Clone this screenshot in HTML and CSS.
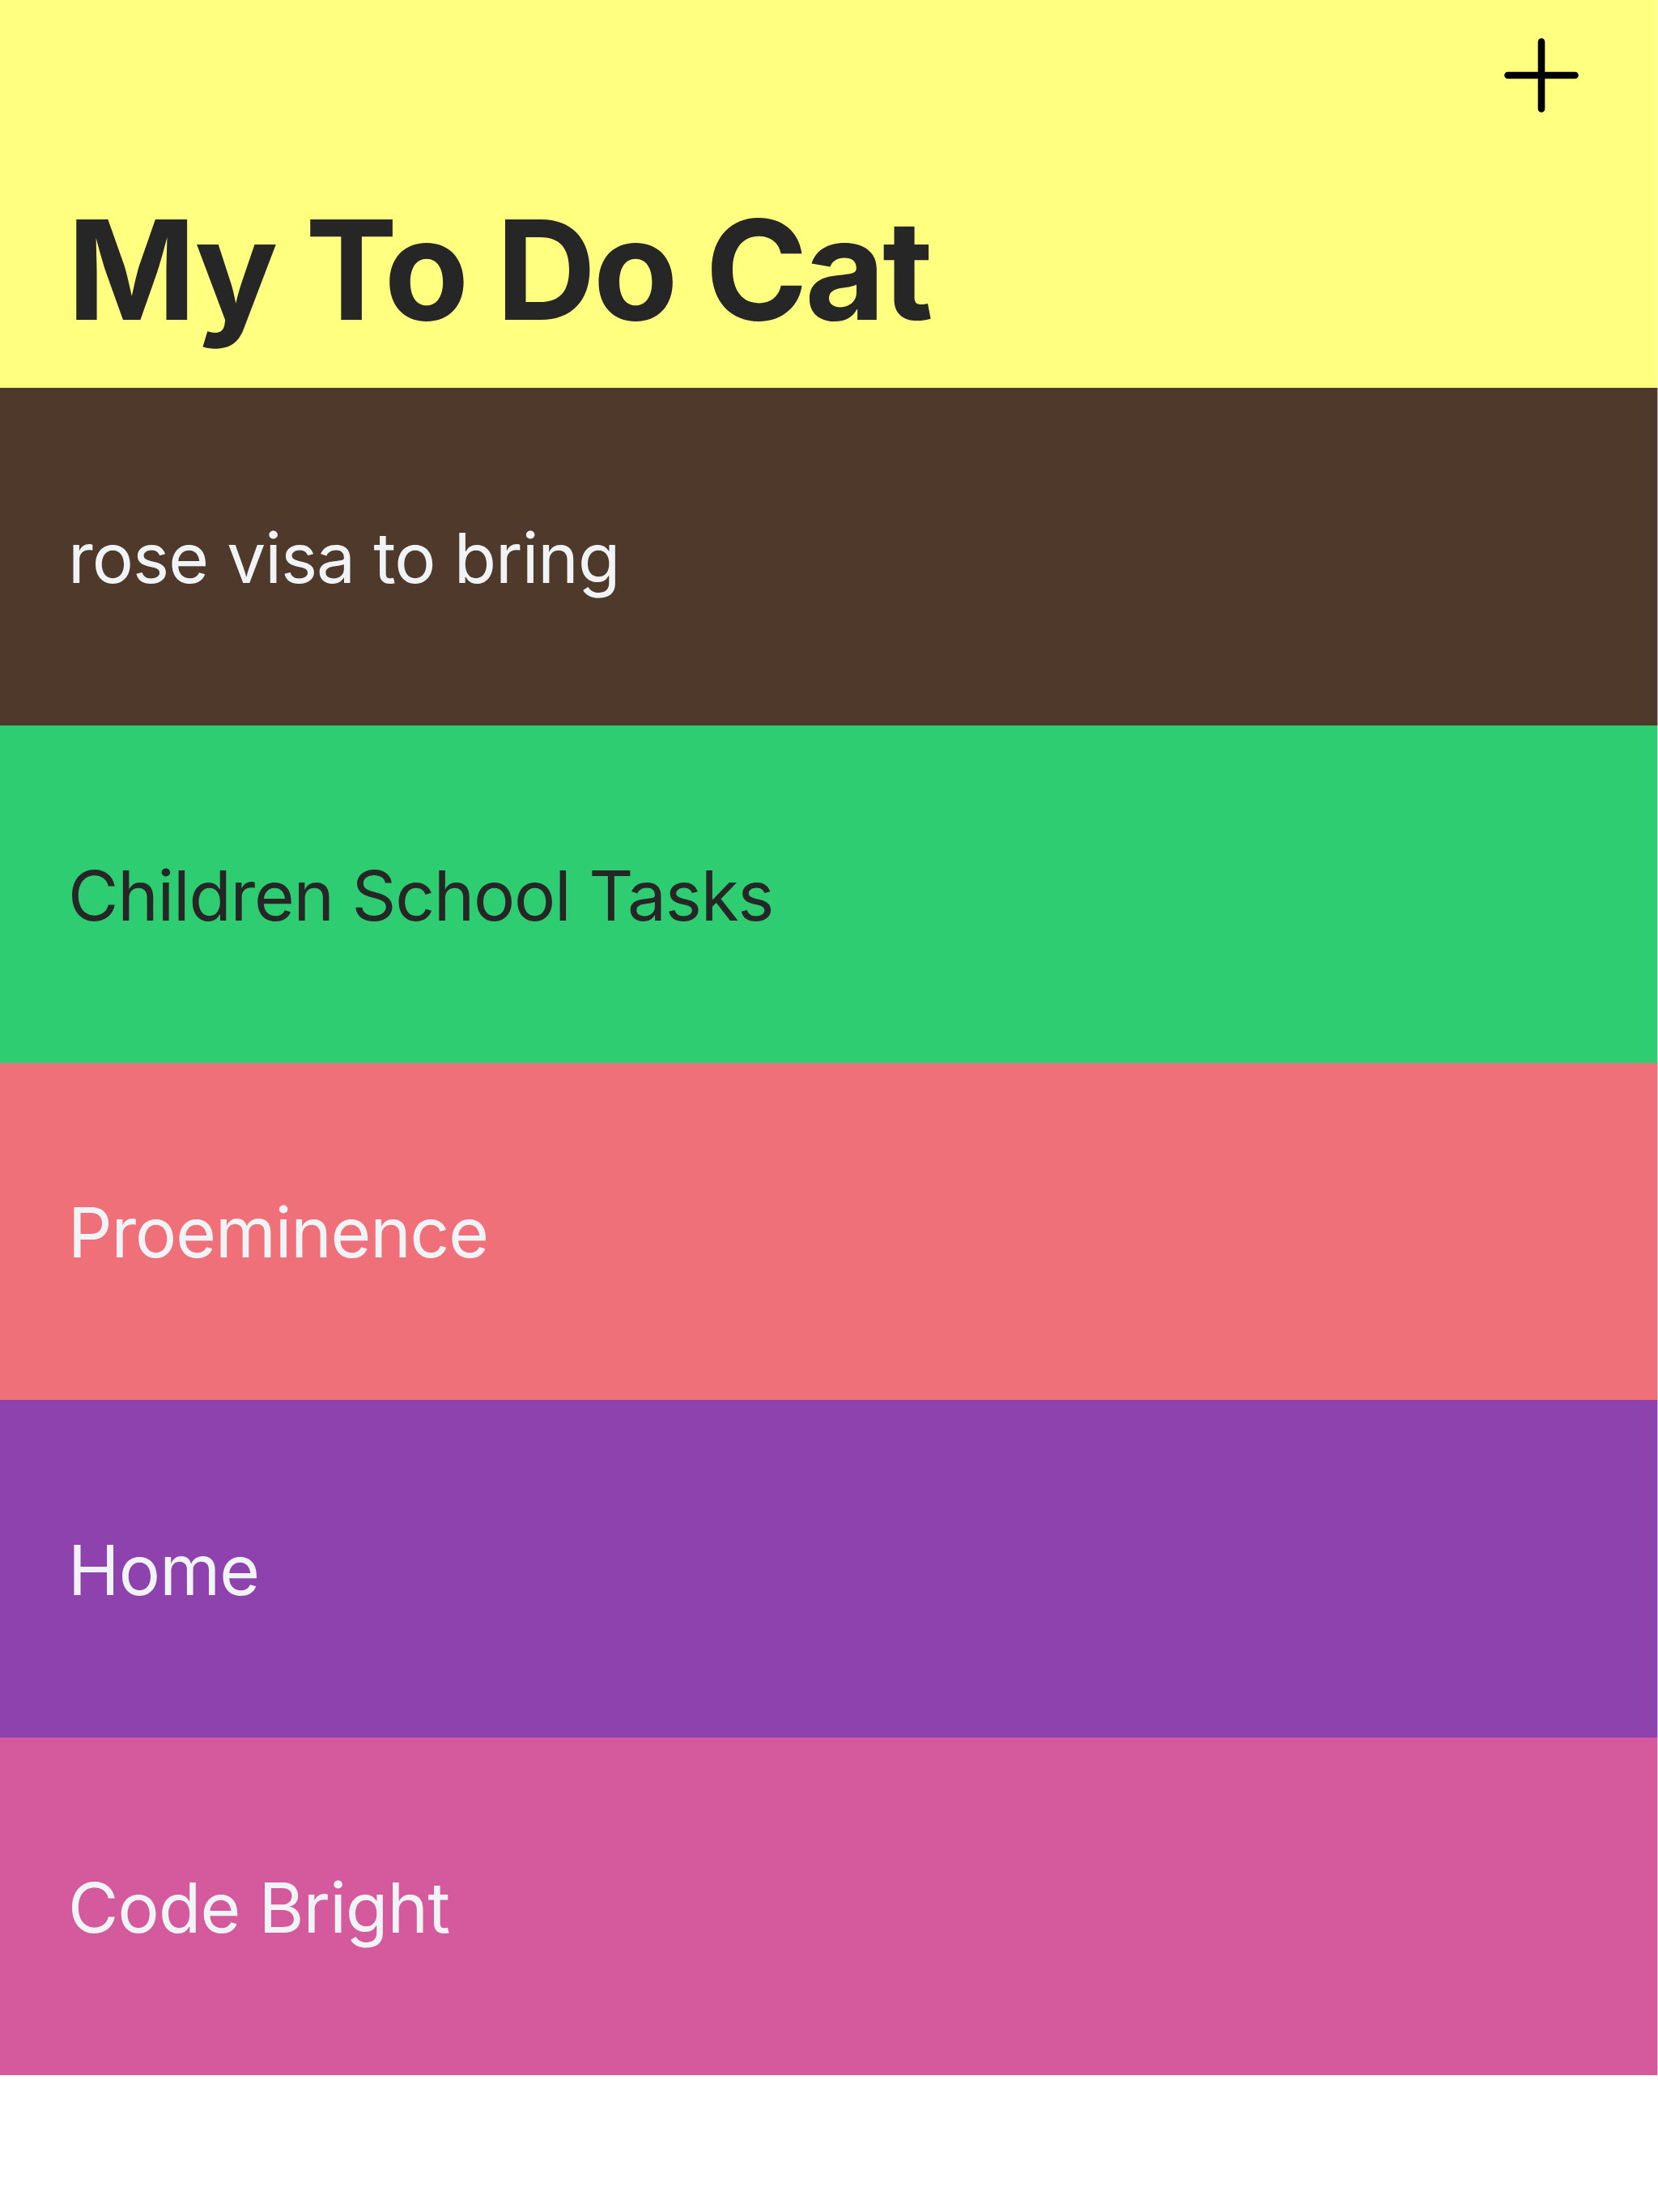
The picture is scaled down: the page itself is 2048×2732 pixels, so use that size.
FILE: index.html
```
<!DOCTYPE html>
<html lang="en">
<head>
    <meta charset="utf-8">
    <title>My To Do Cat</title>
<link rel="stylesheet" href="styles.css">
</head>
<body>
    <div class="header">
        <svg class="add" viewBox="0 0 92 92">
            <path d="M46 4.5V87.5M4.5 46H87.5"/>
        </svg>
        <h1 class="title">My To Do Cat</h1>
    </div>
    <ul class="list">
        <li class="row brown">rose visa to bring</li>
        <li class="row green">Children School Tasks</li>
        <li class="row coral">Proeminence</li>
        <li class="row purple">Home</li>
        <li class="row pink">Code Bright</li>
    </ul>
</body>
</html>
```

FILE: styles.css
```
body
{
    margin: 0;
    background: #fff;
    font-family: Inter, "Liberation Sans", sans-serif;
}
.header
{
    box-sizing: border-box;
    height: 479px;
    padding: 47px 97px 0 83px;
    background: #ffff80;
    color: #262626;
    border-right: 1px solid #ffffb8;
}
.add
{
    display: block;
    width: 92px;
    height: 92px;
    margin-left: auto;
    fill: none;
    stroke: #000;
    stroke-width: 8.6;
    stroke-linecap: round;
}
.title
{
    margin: 90px 0 0;
    font-size: 171px;
    font-weight: 700;
    line-height: 207px;
    letter-spacing: -3.47px;
}
.list
{
    margin: 0;
    padding: 0;
    list-style: none;
}
.row
{
    display: flex;
    align-items: center;
    box-sizing: border-box;
    height: 416.8px;
    padding: 3px 84px 0;
    font-size: 85.5px;
    line-height: 104px;
    color: #f0f4f6;
    border-right: 1px solid rgba(255, 255, 255, 0.6);
}
.brown
{
    background: #4f392b;
    letter-spacing: -0.98px;
}
.green
{
    background: #2ecd71;
    color: #262626;
    letter-spacing: -1.26px;
}
.coral
{
    background: #ef7079;
    letter-spacing: -1.15px;
}
.purple
{
    background: #8e42ad;
    letter-spacing: -0.8px;
}
.pink
{
    background: #d4599d;
    letter-spacing: -0.89px;
}
```
